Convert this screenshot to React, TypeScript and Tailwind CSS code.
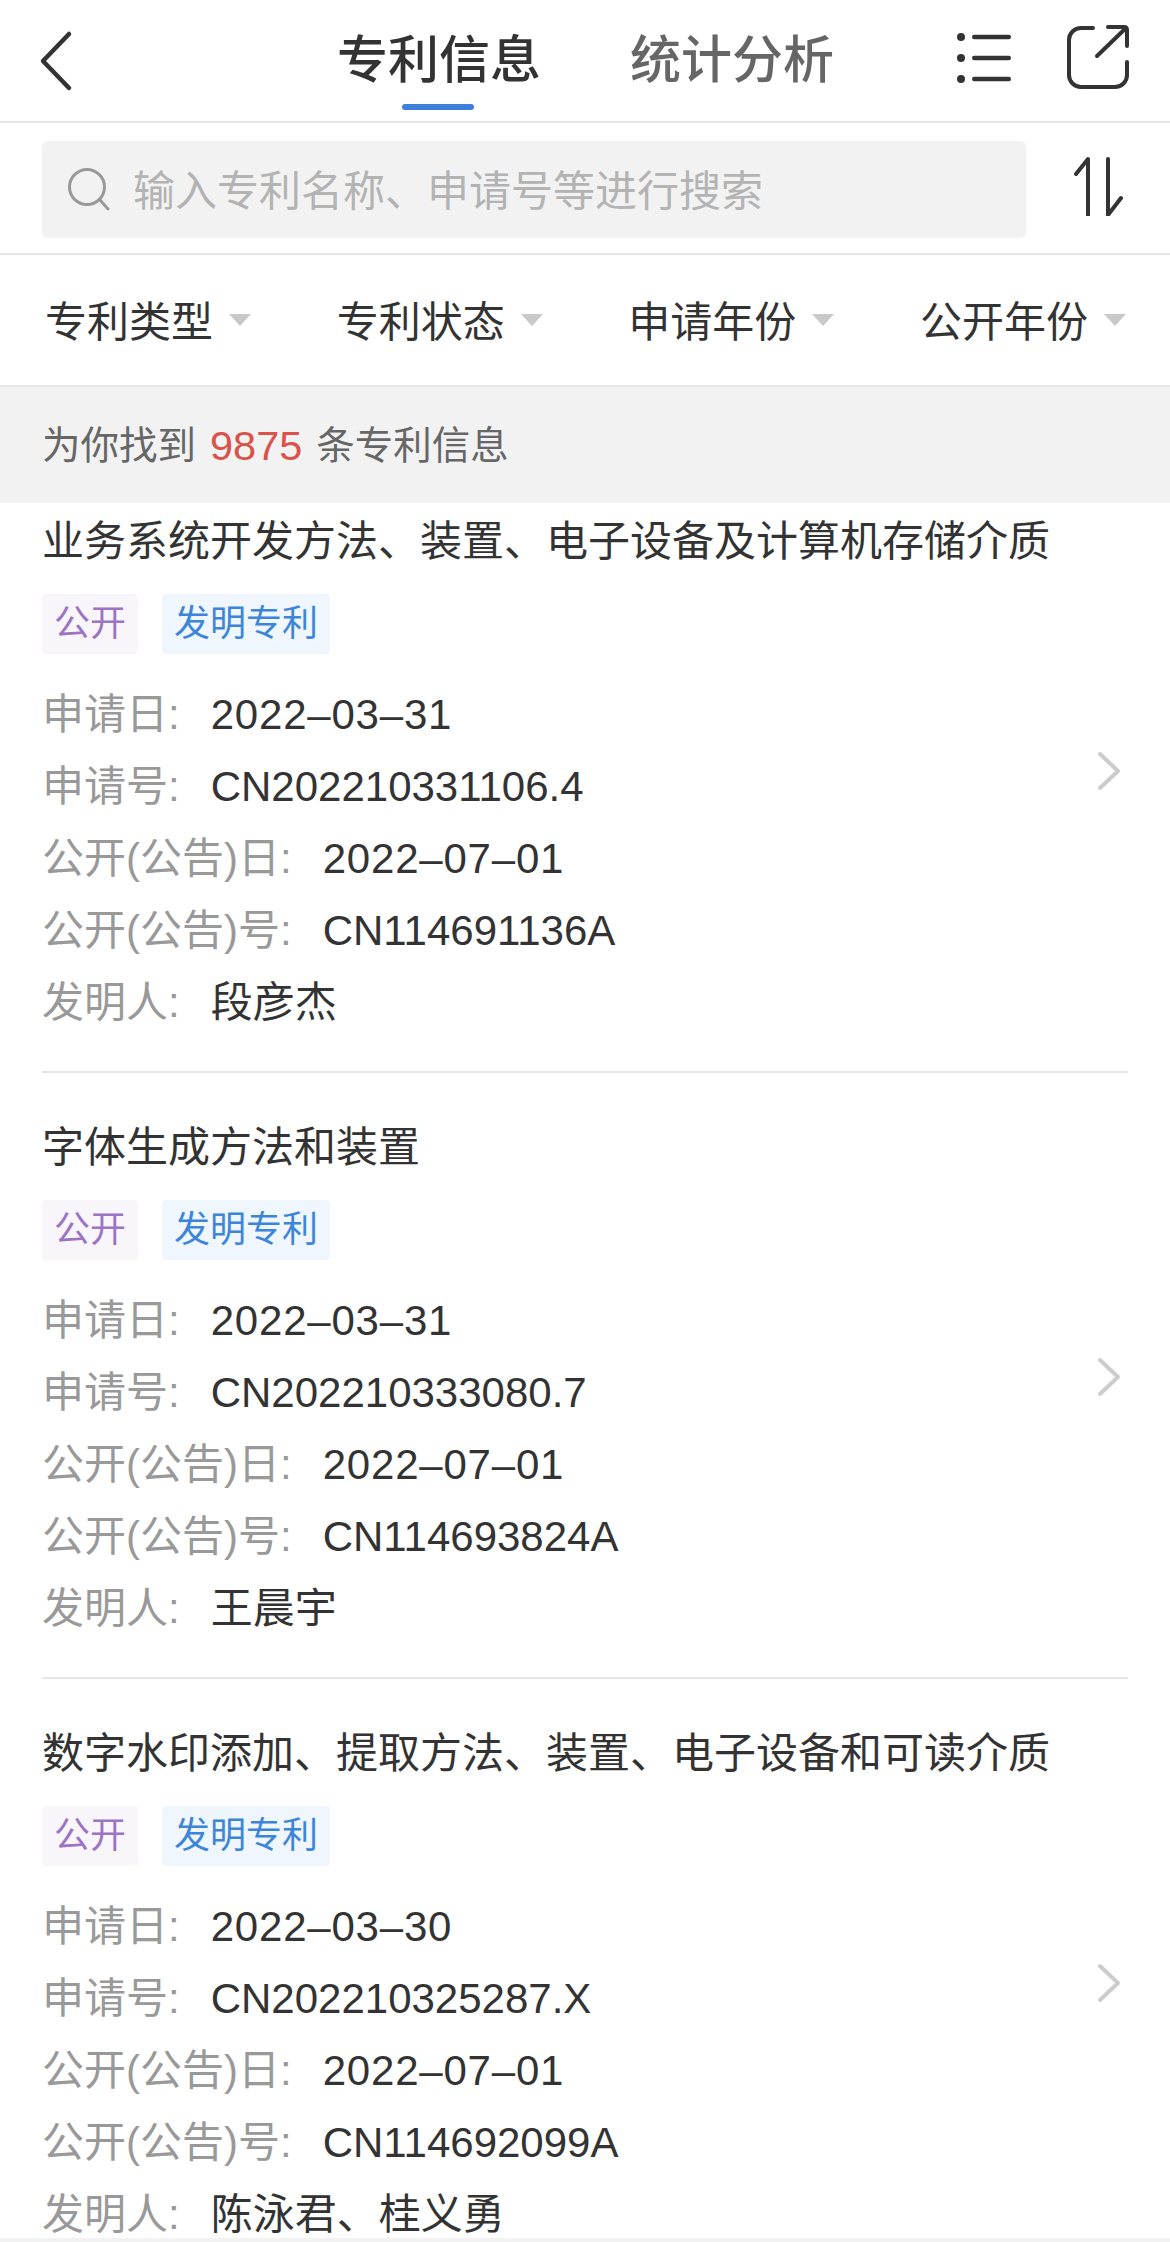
import React from 'react';

interface Patent {
  title: string;
  applyDate: string;
  applyNo: string;
  publicDate: string;
  publicNo: string;
  inventor: string;
}

const patents: Patent[] = [
  {
    title: '业务系统开发方法、装置、电子设备及计算机存储介质',
    applyDate: '2022–03–31',
    applyNo: 'CN202210331106.4',
    publicDate: '2022–07–01',
    publicNo: 'CN114691136A',
    inventor: '段彦杰'
  },
  {
    title: '字体生成方法和装置',
    applyDate: '2022–03–31',
    applyNo: 'CN202210333080.7',
    publicDate: '2022–07–01',
    publicNo: 'CN114693824A',
    inventor: '王晨宇'
  },
  {
    title: '数字水印添加、提取方法、装置、电子设备和可读介质',
    applyDate: '2022–03–30',
    applyNo: 'CN202210325287.X',
    publicDate: '2022–07–01',
    publicNo: 'CN114692099A',
    inventor: '陈泳君、桂义勇'
  }
];

const filters = ['专利类型', '专利状态', '申请年份', '公开年份'];

const InfoRow = ({ label, value, isDate }: { label: string; value: string; isDate?: boolean }) => (
  <div className="flex h-[72px] items-center text-[42px] leading-none">
    <span className="text-[#999999]">{label}</span>
    <span className={isDate ? 'ml-[31px] tracking-[0.8px] text-[#333333]' : 'ml-[31px] text-[#333333]'}>{value}</span>
  </div>
);

const PatentCard = ({ patent }: { patent: Patent }) => (
  <div className="mx-[42px] flex items-center justify-between border-b-2 border-[#e6e6e6] pt-[35px] pb-[32px] first:-mt-[36px] last:border-b-0">
    <div>
      <div className="flex h-[72px] items-center whitespace-nowrap pt-[6px] text-[42px] text-[#333333]">{patent.title}</div>
      <div className="mt-[20px] flex gap-6 text-[36px] leading-none">
        <span className="flex h-[60px] w-[96px] items-center justify-center rounded bg-[#f8f5fb] text-[#9b74c4]">公开</span>
        <span className="flex h-[60px] w-[168px] items-center justify-center rounded bg-[#eff6fd] text-[#3d85d8]">发明专利</span>
      </div>
      <div className="mt-[25px]">
        <InfoRow label="申请日:" value={patent.applyDate} isDate />
        <InfoRow label="申请号:" value={patent.applyNo} />
        <InfoRow label="公开(公告)日:" value={patent.publicDate} isDate />
        <InfoRow label="公开(公告)号:" value={patent.publicNo} />
        <InfoRow label="发明人:" value={patent.inventor} />
      </div>
    </div>
    <svg className="mr-[6px]" width="26" height="40" viewBox="0 0 26 40" fill="none" stroke="#cccccc" strokeWidth="4" strokeLinecap="round" strokeLinejoin="round">
      <path d="M4 3 L22 20 L4 37" />
    </svg>
  </div>
);

export default function App() {
  return (
    <div className="flex h-[2242px] w-[1170px] flex-col overflow-hidden bg-white font-['Liberation_Sans','Noto_Sans_CJK_SC',sans-serif]">
      {/* top tabs */}
      <div className="relative flex h-[123px] shrink-0 items-center border-b-2 border-[#e6e6e6]">
        <svg className="absolute left-[36px] top-[30px]" width="44" height="62" viewBox="0 0 44 62" fill="none" stroke="#333333" strokeWidth="4.5" strokeLinecap="round" strokeLinejoin="round">
          <path d="M33 4 L7 31 L33 58" />
        </svg>
        <div className="ml-[337px] flex gap-[89px] text-[51px] leading-none">
          <span className="font-medium text-[#333333]">专利信息</span>
          <span className="font-medium text-[#666666]">统计分析</span>
        </div>
        <div className="absolute bottom-[11px] left-[402px] h-[6px] w-[72px] rounded-full bg-[#3f7fdc]" />
        <svg className="absolute left-[955px] top-[31px]" width="58" height="54" viewBox="0 0 58 54" fill="#333333">
          <circle cx="6" cy="6" r="4" />
          <circle cx="6" cy="27" r="4" />
          <circle cx="6" cy="48" r="4" />
          <rect x="17" y="3.75" width="39" height="4.5" rx="2.25" />
          <rect x="17" y="24.75" width="39" height="4.5" rx="2.25" />
          <rect x="17" y="45.75" width="39" height="4.5" rx="2.25" />
        </svg>
        <svg className="absolute left-[1066px] top-[24px]" width="64" height="66" viewBox="0 0 64 66" fill="none" stroke="#333333" strokeWidth="4" strokeLinecap="round" strokeLinejoin="round">
          <path d="M27 4 H15 A12 12 0 0 0 3 16 V51 A12 12 0 0 0 15 63 H49 A12 12 0 0 0 61 51 V38" />
          <path d="M61 22 V6 Q61 3 58 3 H42" />
          <path d="M60 4 L31 32" />
        </svg>
      </div>

      {/* search */}
      <div className="flex h-[132px] shrink-0 items-center border-b-2 border-[#e6e6e6] pl-[42px]">
        <div className="mt-[1px] flex h-[96px] w-[984px] items-center rounded-md bg-[#f2f2f2] pl-[25px] shadow-[0_1px_2px_rgba(0,0,0,0.05)]">
          <svg width="44" height="44" viewBox="0 0 44 44" fill="none" stroke="#999999" strokeWidth="3" strokeLinecap="round">
            <circle cx="20" cy="20" r="17.5" />
            <path d="M33 33 L41 42" />
          </svg>
          <span className="ml-[22px] pt-[6px] text-[42px] leading-none text-[#b3b3b3]">输入专利名称、申请号等进行搜索</span>
        </div>
        <svg className="-mt-[5px] ml-[47px]" width="52" height="60" viewBox="0 0 52 60" fill="none" stroke="#333333" strokeWidth="4" strokeLinecap="round" strokeLinejoin="round">
          <path d="M3 18 L15 3 V59" />
          <path d="M35 3 V59 L48 42" />
        </svg>
      </div>

      {/* filters */}
      <div className="flex h-[132px] shrink-0 items-center justify-between border-b-2 border-[#e6e6e6] pr-[44px] pl-[45px]">
        {filters.map((name) => (
          <div key={name} className="flex items-center gap-[16px] text-[42px] leading-none text-[#333333]">
            <span className="pt-[5px]">{name}</span>
            <span className="h-0 w-0 border-x-[11px] border-t-[12px] border-x-transparent border-t-[#c9c9c9]" />
          </div>
        ))}
      </div>

      {/* result count */}
      <div className="flex h-[116px] shrink-0 items-center bg-[#f2f2f2] pl-[42px] pt-[2px] text-[38.5px] leading-none text-[#666666]">
        为你找到<span className="mx-[14px] text-[41.5px] text-[#d9534a]">9875</span>条专利信息
      </div>

      <div className="min-h-0 flex-1 overflow-hidden">
        {patents.map((p) => (
          <PatentCard key={p.applyNo} patent={p} />
        ))}
      </div>
      <div className="h-[4px] shrink-0 bg-[#f2f2f2]" />
    </div>
  );
}
